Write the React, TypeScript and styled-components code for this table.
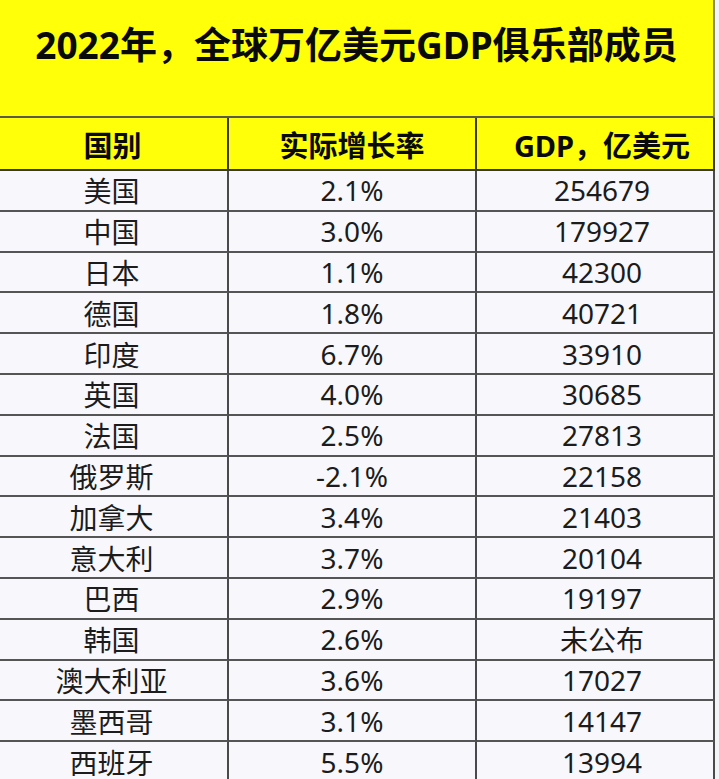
import React from "react";
import styled, { createGlobalStyle } from "styled-components";

const Global = createGlobalStyle`
  html, body { margin: 0; padding: 0; background: #f3f4f8; }
  body { font-family: "Noto Sans", "Noto Sans CJK SC", sans-serif; }
`;

const Page = styled.div`
  width: 715px;
  background: #f7f7fb;
`;

const TitleBar = styled.div`
  height: 118px;
  box-sizing: border-box;
  background: #ffff0a;
  border-right: 2px solid #8a8a6a;
  border-bottom: 2px solid #5a5a4a;
  padding-top: 18px;
  text-align: center;
`;

const Title = styled.h1`
  margin: 0;
  font-family: "Noto Sans", "Noto Sans CJK SC", sans-serif;
  font-size: 37px;
  line-height: 54px;
  font-weight: 700;
  color: #0a0a0a;
`;

const Grid = styled.div`
  display: grid;
  grid-template-columns: 229px 248px 238px;
`;

const HeadCell = styled.div<{ $shift?: number }>`
  height: 53px;
  box-sizing: border-box;
  background: #ffff0a;
  border-right: 2px solid #3a3a30;
  border-bottom: 2px solid #3a3a30;
  display: flex;
  align-items: center;
  justify-content: center;
  padding-left: ${(p) => (p.$shift && p.$shift > 0 ? p.$shift : 0)}px;
  padding-right: ${(p) => (p.$shift && p.$shift < 0 ? -p.$shift : 0)}px;
  font-family: "Noto Sans", "Noto Sans CJK SC", sans-serif;
  font-size: 29px;
  font-weight: 700;
  color: #0a0a0a;
`;

const Cell = styled.div<{ $shift?: number }>`
  height: 40.8px;
  box-sizing: border-box;
  background: #f8f8fc;
  border-right: 2px solid #4a4a4a;
  border-bottom: 2px solid #555;
  display: flex;
  align-items: center;
  justify-content: center;
  padding-left: ${(p) => (p.$shift && p.$shift > 0 ? p.$shift : 0)}px;
  padding-right: ${(p) => (p.$shift && p.$shift < 0 ? -p.$shift : 0)}px;
  font-family: "Noto Sans", "Noto Sans CJK SC", sans-serif;
  font-size: 28px;
  font-weight: 400;
  color: #1c1c1c;
  white-space: nowrap;
`;

const rows: [string, string, string][] = [
  ["美国", "2.1%", "254679"],
  ["中国", "3.0%", "179927"],
  ["日本", "1.1%", "42300"],
  ["德国", "1.8%", "40721"],
  ["印度", "6.7%", "33910"],
  ["英国", "4.0%", "30685"],
  ["法国", "2.5%", "27813"],
  ["俄罗斯", "-2.1%", "22158"],
  ["加拿大", "3.4%", "21403"],
  ["意大利", "3.7%", "20104"],
  ["巴西", "2.9%", "19197"],
  ["韩国", "2.6%", "未公布"],
  ["澳大利亚", "3.6%", "17027"],
  ["墨西哥", "3.1%", "14147"],
  ["西班牙", "5.5%", "13994"],
];

export default function App() {
  return (
    <>
      <Global />
      <Page>
        <TitleBar>
          <Title>2022年，全球万亿美元GDP俱乐部成员</Title>
        </TitleBar>
        <Grid>
          <HeadCell $shift={-2}>国别</HeadCell>
          <HeadCell>实际增长率</HeadCell>
          <HeadCell $shift={14}>GDP，亿美元</HeadCell>
          {rows.map(([c, g, v]) => (
            <React.Fragment key={c}>
              <Cell $shift={-4}>{c}</Cell>
              <Cell>{g}</Cell>
              <Cell $shift={14}>{v}</Cell>
            </React.Fragment>
          ))}
        </Grid>
      </Page>
    </>
  );
}
